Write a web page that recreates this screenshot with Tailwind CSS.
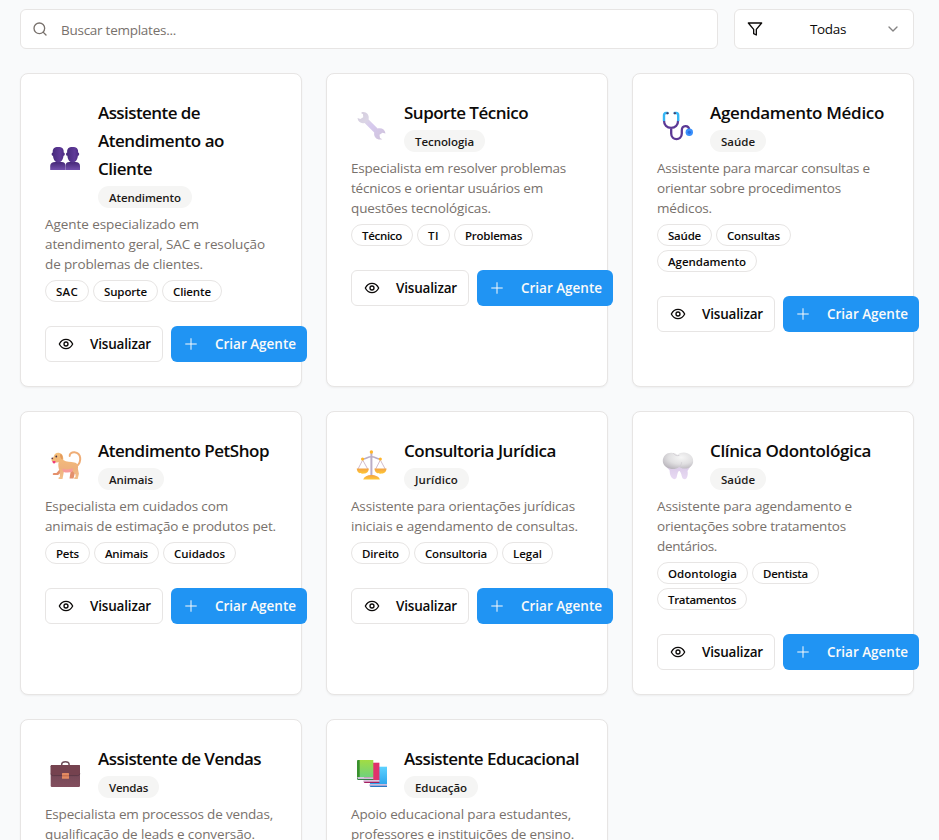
<!DOCTYPE html>
<html lang="pt-BR">
<head>
<meta charset="utf-8">
<title>Templates de agentes</title>
<script src="https://cdn.jsdelivr.net/npm/@tailwindcss/browser@4"></script>
</head>
<body class="h-[840px] overflow-hidden bg-[#f9fafb] font-['Open_Sans','Noto_Sans',sans-serif] text-[#0c0a09]">
<main class="h-[840px] w-[939px] overflow-hidden px-5 pt-[9px]">
  <div class="flex w-[894px] gap-4">
    <label class="flex h-10 w-[698px] items-center rounded-md border border-[#e7e5e4] bg-white pl-[11px]">
      <svg class="size-4 shrink-0 text-[#78716c]" viewBox="0 0 24 24" fill="none" stroke="currentColor" stroke-width="2" stroke-linecap="round" stroke-linejoin="round"><circle cx="11" cy="11" r="8"/><path d="m21 21-4.3-4.3"/></svg>
      <span class="ml-[13px] mt-0.5 whitespace-nowrap text-[13.5px] text-[#78716c]" data-w="115">Buscar templates...</span>
    </label>
    <button class="flex h-10 w-[180px] items-center justify-between rounded-md border border-[#e7e5e4] bg-white px-3">
      <svg class="size-4 shrink-0" viewBox="0 0 24 24" fill="none" stroke="currentColor" stroke-width="2" stroke-linecap="round" stroke-linejoin="round"><path d="M22 3H2l8 9.46V19l4 2v-8.54L22 3z"/></svg>
      <span class="ml-2 whitespace-nowrap text-[13.5px]" data-w="36">Todas</span>
      <svg class="size-4 shrink-0 opacity-50" viewBox="0 0 24 24" fill="none" stroke="currentColor" stroke-width="2" stroke-linecap="round" stroke-linejoin="round"><path d="m6 9 6 6 6-6"/></svg>
    </button>
  </div>
  <section id="grid" class="mt-6 grid w-[894px] grid-cols-3 gap-6"></section>
</main>
<script>
const art = {
  people: `<defs><linearGradient id="pa" x1="0" x2="1"><stop stop-color="#45297a"/><stop offset=".65" stop-color="#5f3a98"/><stop offset="1" stop-color="#4b2b80"/></linearGradient><linearGradient id="pb" x1="0" x2="0" y1="0" y2="1"><stop stop-color="#452777"/><stop offset="1" stop-color="#7350ac"/></linearGradient></defs>
    <g fill="url(#pb)"><path d="M1.2 32v-4c0-2.500 2-4 5-4h6.500c2.500 0 3.800 1.500 3.800 4v4z"/><path d="M16.500 32v-4c0-2.500 1.300-4 3.800-4h6c3 0 4.700 1.500 4.700 4v4z"/></g>
    <g fill="url(#pa)"><path d="M3.800 14.500C3.400 10.800 5.200 9 9.200 9s5.900 1.800 5.500 5.500c1.500.2 1.500 3.300-.2 3.300-.4 4.200-2.600 6.800-5.300 6.800S4.300 22 4 17.800c-1.800 0-1.700-3.300-.2-3.300z"/><path d="M18.200 14.500c-.4-3.700 1.400-5.500 5.400-5.500s5.900 1.800 5.500 5.500c1.500.2 1.500 3.300-.2 3.300-.4 4.200-2.600 6.800-5.300 6.800s-4.900-2.600-5.200-6.800c-1.800 0-1.700-3.300-.2-3.300z"/></g>`,
  wrench: `<defs><linearGradient id="wa" x1="0" y1="0" x2="1" y2="1"><stop stop-color="#d3cbdc"/><stop offset=".3" stop-color="#dbd5e5"/><stop offset=".5" stop-color="#d6c9ee"/><stop offset="1" stop-color="#cfc3da"/></linearGradient></defs>
    <path fill="url(#wa)" d="M7 2.200c4.200-.7 7.800 2.600 6.600 7.200l9 9.100c4-1 7.400 1 7.900 4.900l-3-.7-3 2 .5 3.200 2.300 1.300c-4.800 1.400-9-1.800-8.100-6.700l-9.600-9.500c-3.700.8-6.600-1-7.100-4.900l2.900.8L8.200 7.200 8 4.200 6 2.900z"/>`,
  steth: `<g fill="none" stroke-linecap="round"><path stroke="#5b3894" stroke-width="2.300" d="M3 10.500c0 4.500 3 7.300 7.100 7.300s7-2.800 7-7.300M10.200 18v5.500c0 7.500 10.600 7.500 10.600 0v-3c0-5.800 7-5.800 7.500-.5"/><path stroke="#35b6f5" stroke-width="2.400" d="M6.500 3H5C3.600 3 3 4 3 5.300V10M13.700 3h1.600c1.300 0 1.900 1 1.900 2.300V10"/><path stroke="#463b67" stroke-width="2" d="M6.300 3.200h.4M13.600 3.200h.4"/></g><circle cx="28.300" cy="22.300" r="3.700" fill="#3990fb"/><circle cx="28.300" cy="22.300" r="1.600" fill="#256ee3"/>`,
  dog: `<defs><linearGradient id="da" x1="0" x2="0" y1="0" y2="1"><stop stop-color="#f6c07a"/><stop offset=".6" stop-color="#eeb17c"/><stop offset="1" stop-color="#f3c08a"/></linearGradient></defs>
    <path d="M27.500 18.500C33 14 32.500 5 25.500 4.300c-3-.2-5 1.600-4.800 3.600" fill="none" stroke="#efad76" stroke-width="2" stroke-linecap="round"/>
    <path fill="#e4906b" d="M11 21l-3.500 4H4.800c-1.500.3-1.300 2-.2 2.100h4.500l4.500-4zM22 21l-1.500 9.500h4l2-8z"/>
    <path fill="url(#da)" d="M4.800 8.500C5.300 5.500 8 4.200 10.500 5c2.600.3 4 3.200 3.800 7 3 2 7.700 1.900 11 2.400 3.300.6 4.200 3.500 3.600 6.300l1 5-1.200 5.300h-3.200c-.8-.8 0-1.800 1-2v-2.500l-3-3.500c-2.500 1.400-6.200 1.300-8.600.5L13.500 31h-3.700c-.9-.8-.1-2 1.100-2L10.800 23C9.300 20.300 9 17 9.600 14c-2.200.8-5.200.8-6.600-.7-.9-1.100-.8-2.600.6-3z"/>
    <path fill="#f79b9a" d="M13 20.500c3.500 1.200 7.500 1.200 11-.2l-.7 3.500c-2.800 1-6.300.9-8.900.2z"/><path fill="#e39a5c" d="M11 6.300c2-.5 2.900 1.700 2.700 5-1.400.3-2.700-1.200-2.700-5z"/><path fill="#f03d79" d="M3.600 13h2.800v1.700c-.8 1.200-2.300.8-2.800-.3z"/><circle cx="7.300" cy="8.500" r=".9" fill="#433044"/><circle cx="3.300" cy="10.300" r=".9" fill="#5f3b4b"/>`,
  scales: `<g stroke="#bbaec6" fill="none"><path stroke-width="2" d="M16.400 5v23"/><path stroke-width="1.500" d="M7.600 11c3.500.3 4.500-2.300 8.800-2.300s5.300 2.600 8.900 2.300"/><path stroke="#d2bccb" stroke-width="1" d="M7.700 12 3 21M7.700 12l5 9M25.300 12l-4.600 9M25.300 12l4.900 9"/></g>
    <defs><linearGradient id="sa" x1="0" x2="0" y1="0" y2="1"><stop stop-color="#f3a146"/><stop offset="1" stop-color="#ffc933"/></linearGradient></defs>
    <g fill="url(#sa)"><path d="M1.800 20.500h12c0 3.500-2.500 5.200-6 5.200s-6-1.700-6-5.200zM19.500 20.500h12c0 3.500-2.500 5.200-6 5.200s-6-1.700-6-5.200z"/><path d="M8.200 31.500c1-3 4-4.500 8.200-4.500s7.500 1.500 8.500 4.500z"/></g><g fill="#ffb52b"><circle cx="16.400" cy="4" r="1.700"/><circle cx="7.600" cy="11" r="1.600"/><circle cx="25.300" cy="11" r="1.600"/></g>`,
  tooth: `<defs><linearGradient id="ta" x1="0" x2="0" y1="14" y2="31" gradientUnits="userSpaceOnUse"><stop stop-color="#d6d0dc"/><stop offset=".45" stop-color="#decfeb"/><stop offset="1" stop-color="#e8daf3"/></linearGradient><radialGradient id="tb" cx=".6" cy=".3" r=".75"><stop stop-color="#f6f6f6"/><stop offset=".55" stop-color="#e0dfe1"/><stop offset="1" stop-color="#b9b5bc"/></radialGradient></defs>
    <path fill="url(#ta)" d="M4 15h27c-.6 3-3 5-4.500 8 .6 2.500.2 5-.8 7-1.200 1.800-3.800 1.500-4.500-.5-.8-2.400-1-4.500-2.600-6.500-1.900-.6-2.200 4.100-3 6.500-.8 2-3.200 2.200-4.500.5C8.500 27 9 24.500 8.500 22 6.500 20.500 4.500 18 4 15z"/>
    <path fill="url(#tb)" d="M16.500 6.800C19 4.500 23 4 26.500 5.200c4 1.500 6.200 5 5.600 9-.8 4.300-4.800 6.600-9 6.300-2-.2-3.600-.8-5-1.600-2.400 1.800-5.500 2.400-8.600 1.800C5 19.800 1.900 17 1.800 13c0-5 4-8.500 8.700-8.300 2.300 0 4.400.8 6 2.100z"/>
    <path fill="none" stroke="#cfccd2" stroke-width=".8" stroke-linecap="round" d="M12.500 5.500c1.500 2 3.500 2.500 5.500 2"/><path fill="none" stroke="#cfcbd2" stroke-width=".8" d="M18.300 18.800c1.500-1.300 2.200-2.800 2.300-4.500"/>`,
  briefcase: `<defs><linearGradient id="ba" x1="0" x2="0" y1="0" y2="1"><stop stop-color="#6b4552"/><stop offset="1" stop-color="#834e5e"/></linearGradient></defs>
    <path d="M12.700 10V8.500c0-3.700 7.400-3.700 7.400 0V10" fill="none" stroke="#6e505b" stroke-width="1.500"/><rect x="1.700" y="9" width="29.300" height="22" rx="1.200" fill="url(#ba)"/><path fill="#75424f" d="M1.700 10.200c0-.7.500-1.200 1.200-1.200h26.900c.7 0 1.200.5 1.200 1.200v7.300c-.4 1.300-1.200 2-2.600 2H4.300c-1.400 0-2.200-.7-2.600-2z"/><path d="M1.800 17.700c.5 1.300 1.300 1.900 2.600 1.900h24c1.300 0 2.100-.6 2.500-1.900" fill="none" stroke="#553544" stroke-width=".8"/><rect x="13" y="17" width="7" height="5.800" rx=".5" fill="#e28a62"/><path stroke="#bd664c" d="M13 19.800h7"/>`,
  books: `<defs><linearGradient id="ka" x1="0" x2="0" y1="0" y2="1"><stop stop-color="#a2dc43"/><stop offset="1" stop-color="#6fd27d"/></linearGradient><linearGradient id="kb" x1="0" x2="0" y1="0" y2="1"><stop stop-color="#5ed2ff"/><stop offset="1" stop-color="#2fa7ed"/></linearGradient></defs>
    <path fill="url(#kb)" d="M15 10.700h17V28H15z"/><path fill="#cbb9dc" d="M14.500 28H32v2H14.500z"/><path fill="#2a78c4" d="M14.500 29.800H32V31H15.500z"/><path fill="#e0316c" d="M9 6.700h15.400V24H9z"/><path fill="#dbc3df" d="M8.500 24h15.900v2H8.500z"/><path fill="#a51f60" d="M8.500 25.800h15.900V27H9.500z"/><path fill="url(#ka)" d="M3 4h15.300v17.300H3z"/><path fill="#39912e" d="M3.200 4h1.500v17.300H2V5.200C2 4.500 2.500 4 3.200 4z"/><path fill="#cebfdb" d="M2.500 21.300h15.800v1.900H2.500z"/><path fill="#367f48" d="M2 20.500l1 2.500h15.300v1H3.200C2.500 24 2 23.500 2 22.800z"/>`
};

/* Every text entry is [text, measure in px]. */
const templates = [
  { icon: 'people', title: [['Assistente de',102],['Atendimento ao',126],['Cliente',54]], cat: ['Atendimento',94],
    desc: [['Agente especializado em',154],['atendimento geral, SAC e resolução',220],['de problemas de clientes.',158]],
    tags: [['SAC',44],['Suporte',65],['Cliente',60]] },
  { icon: 'wrench', title: [['Suporte Técnico',124]], cat: ['Tecnologia',81],
    desc: [['Especialista em resolver problemas',215],['técnicos e orientar usuários em',192],['questões tecnológicas.',140]],
    tags: [['Técnico',62],['TI',33],['Problemas',79]] },
  { icon: 'steth', title: [['Agendamento Médico',174]], cat: ['Saúde',56],
    desc: [['Assistente para marcar consultas e',213],['orientar sobre procedimentos',184],['médicos.',55]],
    tags: [['Saúde',55],['Consultas',75],['Agendamento',100]] },
  { icon: 'dog', title: [['Atendimento PetShop',171]], cat: ['Animais',66],
    desc: [['Especialista em cuidados com',183],['animais de estimação e produtos pet.',231]],
    tags: [['Pets',45],['Animais',65],['Cuidados',73]] },
  { icon: 'scales', title: [['Consultoria Jurídica',152]], cat: ['Jurídico',65],
    desc: [['Assistente para orientações jurídicas',224],['iniciais e agendamento de consultas.',227]],
    tags: [['Direito',59],['Consultoria',84],['Legal',51]] },
  { icon: 'tooth', title: [['Clínica Odontológica',161]], cat: ['Saúde',56],
    desc: [['Assistente para agendamento e',195],['orientações sobre tratamentos',189],['dentários.',60]],
    tags: [['Odontologia',91],['Dentista',67],['Tratamentos',90]] },
  { icon: 'briefcase', title: [['Assistente de Vendas',163]], cat: ['Vendas',61],
    desc: [['Especialista em processos de vendas,',228],['qualificação de leads e conversão.',210]],
    tags: [] },
  { icon: 'books', title: [['Assistente Educacional',175]], cat: ['Educação',74],
    desc: [['Apoio educacional para estudantes,',220],['professores e instituições de ensino.',223]],
    tags: [] }
];
const lines = list => list.map(([t, w]) => `<span class="block w-max whitespace-nowrap" data-w="${w}">${t}</span>`).join('');
const pill = ([t, w], cls) => `<span class="${cls}" style="width:${w}px"><span class="mt-px whitespace-nowrap" data-w="${w - 22}">${t}</span></span>`;

document.getElementById('grid').innerHTML = templates.map(c => `
  <article class="rounded-lg border border-[#e7e5e4] bg-white p-6 shadow-xs">
    <header class="flex items-center gap-3">
      <div class="flex w-[41px] shrink-0 pl-1 pt-0.5"><svg class="size-8 shrink-0 overflow-visible" viewBox="0 0 32 32">${art[c.icon]}</svg></div>
      <div>
        <h3 class="mb-[3px] pt-px text-[17px] font-semibold leading-7">${lines(c.title)}</h3>
        ${pill(c.cat, 'flex h-[22px] items-center justify-center rounded-full bg-[#f5f5f4] text-[11.5px] font-semibold text-[#1c1917]')}
      </div>
    </header>
    <p class="mt-1.5 text-[13.5px] leading-5 text-[#78716c]">${lines(c.desc)}</p>
    <div class="mt-1.5 flex flex-wrap gap-1">${c.tags.map(t => pill(t, 'flex h-[22px] items-center justify-center rounded-full border border-[#e7e5e4] text-[11.5px] font-semibold')).join('')}</div>
    <div class="mt-6 flex gap-2">
      <button class="flex h-9 w-[118px] shrink-0 items-center gap-4 rounded-md border border-[#e7e5e4] bg-white px-3 text-[13.5px] font-semibold">
        <svg class="size-4 shrink-0" viewBox="0 0 24 24" fill="none" stroke="currentColor" stroke-width="2" stroke-linecap="round" stroke-linejoin="round"><path d="M2 12s3.500-7 10-7 10 7 10 7-3.500 7-10 7S2 12 2 12Z"/><circle cx="12" cy="12" r="3"/></svg>
        <span class="whitespace-nowrap" data-w="61">Visualizar</span>
      </button>
      <button class="flex h-9 w-[136px] shrink-0 items-center gap-4 rounded-md bg-[#2094f3] px-3 text-[13.5px] font-semibold text-[#fafaf9]">
        <svg class="size-4 shrink-0" viewBox="0 0 24 24" fill="none" stroke="currentColor" stroke-width="1.500" stroke-linecap="round"><path d="M4 12h16M12 4v16"/></svg>
        <span class="whitespace-nowrap" data-w="81">Criar Agente</span>
      </button>
    </div>
  </article>`).join('');

/* Track each label to its measure, once styles and fonts are in place. */
function track() {
  document.querySelectorAll('[data-w]').forEach(el => {
    el.style.letterSpacing = '0px';
    const range = document.createRange();
    range.selectNodeContents(el);
    const gap = Number(el.dataset.w) - range.getBoundingClientRect().width;
    el.style.letterSpacing = (gap / el.textContent.length).toFixed(3) + 'px';
  });
}
track();
window.addEventListener('load', track);
document.fonts.ready.then(track);
requestAnimationFrame(track);
setTimeout(track, 100);
</script>
</body>
</html>
